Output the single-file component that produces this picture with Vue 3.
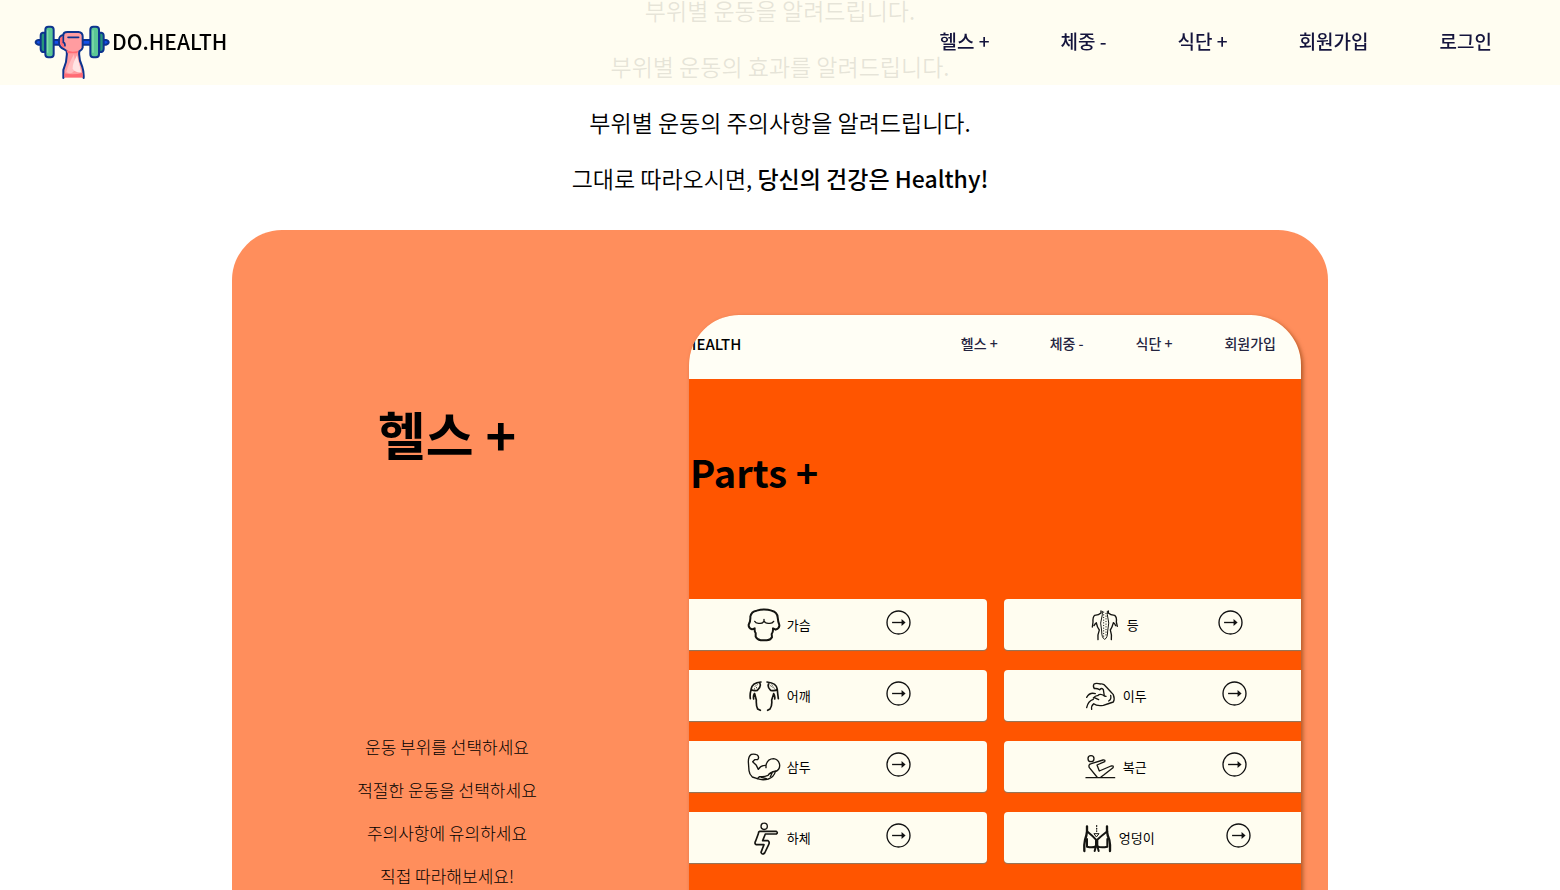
<script setup>
const navItems = ['헬스 +', '체중 -', '식단 +', '회원가입', '로그인']
const previewNav = ['헬스 +', '체중 -', '식단 +', '회원가입']
const steps = ['운동 부위를 선택하세요', '적절한 운동을 선택하세요', '주의사항에 유의하세요', '직접 따라해보세요!']

const parts = [
  {
    name: '가슴',
    box: '189 52 126 102',
    shapes: [
      { d: 'M230 60 Q253 53 275 60 Q292 64 293 80 Q294 92 298 103 Q299 113 287 117 L279 113 Q280 123 275 130 L276 140 Q271 149 260 149 H242 Q231 147 227 138 L227 127 Q223 122 224 113 L216 116 Q205 112 206 102 Q212 91 211 78 Q214 62 230 60 Z', w: 6 },
      { d: 'M224 92 Q227 99 238 98 Q249 99 252 91 Q256 99 267 98 Q277 99 281 92 M252 86 V93', w: 4 }
    ]
  },
  {
    name: '등',
    box: '251 52 126 102',
    shapes: [
      { d: 'M305 61 V67 Q299 73 286 74 Q280 79 281 94 L279 109 M327 61 V67 Q333 73 346 74 Q353 79 351 94 L354 107 M291 96 Q287 99 284 105 M342 96 Q347 99 349 105 M291 97 Q294 111 300 118 Q294 133 296 147 M342 97 Q338 111 333 118 Q338 133 336 147', w: 4 },
      { d: 'M309 62 V72 Q300 98 307 121 Q307 142 316 146 Q325 142 325 121 Q332 98 324 72 V62', w: 3 },
      { d: 'M313 64 V139 M320 68 V136', w: 3, dash: '1 7' }
    ]
  },
  {
    name: '어깨',
    box: '189 265 126 102',
    shapes: [
      { d: 'M243 274 Q216 276 213 296 Q218 302 232 299 Q244 288 240 279 M213 298 Q209 311 211 324 M223 309 Q219 316 221 325 M224 309 L229 328 Q228 346 233 355 L241 359 M261 274 Q290 277 292 296 Q286 302 272 299 Q261 289 266 279 M292 298 Q293 309 295 324 M281 309 Q286 317 284 325 M281 309 L275 328 Q277 346 270 355 L263 359', w: 5 },
      { d: 'M225 287 L234 281 M223 295 L233 289 M270 284 L280 292 M276 283 L284 295', w: 3, dash: '1 6' }
    ]
  },
  {
    name: '이두',
    box: '240 265 126 102',
    shapes: [
      { d: 'M302 297 Q292 292 286 294 Q281 286 285 280 Q291 276 305 280 Q313 277 322 289 Q334 302 343 312 Q348 325 343 334 Q327 339 313 344 Q293 347 284 339 Q276 346 278 356', w: 4 },
      { d: 'M302 297 Q309 290 313 297 L316 316 Q304 307 296 315 Q290 314 283 322 M316 316 L321 317 M335 314 Q338 326 329 331 M289 309 Q272 304 263 320 M286 321 L299 327 M283 326 Q267 331 263 351', w: 4 }
    ]
  },
  {
    name: '삼두',
    box: '189 46 126 102',
    shapes: [
      { d: 'M224 75 L233 75 Q239 68 232 61 Q224 57 214 59 Q205 65 205 81 L207 108 Q208 119 217 127 L232 132 Q247 138 265 133 Q282 127 286 111 Q300 105 299 91 Q297 75 281 72 Q262 72 258 92 Q243 91 235 104 L229 92 L218 81 Z M258 92 V99', w: 4 },
      { d: 'M288 109 Q270 113 264 122 Q251 127 238 126 L232 132 M278 111 L271 126 M244 128 L259 132', w: 4 }
    ]
  },
  {
    name: '복근',
    box: '240 46 126 102',
    shapes: [
      { d: 'M285 72 A9 9 0 1 1 267 72 A9 9 0 1 1 285 72', w: 4 },
      { d: 'M294 127 L271 99 Q267 89 277 87 L312 76 Q320 75 317 81 L294 91 L301 109 L336 94 Q345 92 342 99 L314 121 L306 127 M261 129 H347', w: 4 }
    ]
  },
  {
    name: '하체',
    box: '189 259 126 102',
    shapes: [
      { d: 'M262 275 A9 9 0 1 1 243 275 A9 9 0 1 1 262 275', w: 4 },
      { d: 'M239 290 H289 Q295 294 289 298 H256 L248 318 H264 Q270 322 266 330 L254 355 Q246 362 243 353 L252 330 H229 Q222 327 227 319 L235 297 Q235 291 239 290 Z', w: 5 }
    ]
  },
  {
    name: '엉덩이',
    box: '227 259 126 102',
    shapes: [
      { d: 'M263 275 V290 Q262 302 257 316 Q254 328 255 349 M323 275 V290 Q324 302 330 316 Q333 328 332 349', w: 7 },
      { d: 'M263 290 Q280 304 292 317 Q306 304 324 290 M263 313 V336 Q282 341 290 334 V317 M324 313 V336 Q304 341 294 334 V317 M290 334 L286 349 M294 334 L298 349', w: 6 },
      { d: 'M292 273 V290', w: 4, dash: '2 6' },
      { d: 'M285 297 H299 L292 306 Z', w: 3 }
    ]
  }
]
</script>

<template>
  <div class="page">
    <header class="topbar">
      <a class="brand" href="#">
        <svg class="brand-logo" viewBox="102 75 228 162" aria-hidden="true">
          <g stroke="#0d348e" stroke-width="6" stroke-linejoin="round" stroke-linecap="round">
            <path d="M115 120 H318 Q326 122 326 127 Q326 132 318 134 H115 Q107 132 107 127 Q107 122 115 120 Z" fill="#1350e8" />
            <path d="M136 98 H128 Q122 99 122 107 V146 Q122 154 128 156 H136 Z" fill="#27967a" />
            <path d="M298 98 H304 Q311 99 311 107 V146 Q311 154 304 156 H298 Z" fill="#27967a" />
            <rect x="136" y="80" width="25" height="92" rx="9" fill="#5bc795" />
            <rect x="271" y="80" width="26" height="92" rx="9" fill="#5bc795" />
            <path d="M190 234 V210 Q203 181 200 153 L191 147 Q177 142 177 127 Q175 108 190 105 Q190 96 202 96 H235 Q248 97 248 109 V143 Q247 149 238 154 Q235 176 247 201 Q252 216 251 234" fill="#ff9ca0" />
          </g>
          <path d="M180 115 Q179 132 187 141 L193 144 V132 Q189 127 190 110 Q183 109 180 115 M193 231 V220 Q222 226 248 218 V231 Z M199 151 L218 155 L235 153 L231 160 H203 Z" fill="#ff6b74" />
          <path d="M222 163 Q205 193 199 216 Q217 228 227 205 Z" fill="#ffbec1" />
          <path d="M231 166 Q216 195 218 206 Q227 219 244 217 L240 201 Z" fill="#ffe4e4" />
          <path d="M190 106 V127 Q195 128 195 137 M204 112 H236" fill="none" stroke="#0d348e" stroke-width="5" stroke-linecap="round" />
          <path d="M143 91 V158 M279 91 V158" stroke="#83dfac" stroke-width="4" />
        </svg>
        <span>DO.HEALTH</span>
      </a>
      <nav class="menu">
        <a v-for="item in navItems" :key="item" href="#">{{ item }}</a>
      </nav>
    </header>

    <main>
      <section class="intro">
        <p>부위별 운동을 알려드립니다.</p>
        <p>부위별 운동의 효과를 알려드립니다.</p>
        <p>부위별 운동의 주의사항을 알려드립니다.</p>
        <p>그대로 따라오시면, <strong>당신의 건강은 Healthy!</strong></p>
      </section>

      <section class="feature">
        <div class="feature-text">
          <h2>헬스 +</h2>
          <div class="steps">
            <p v-for="step in steps" :key="step">{{ step }}</p>
          </div>
        </div>

        <div class="preview">
          <div class="preview-bar">
            <span class="preview-brand">DO.HEALTH</span>
            <div class="preview-menu">
              <span v-for="item in previewNav" :key="item">{{ item }}</span>
            </div>
          </div>
          <h3>Parts +</h3>
          <div class="parts">
            <div v-for="part in parts" :key="part.name" class="part">
              <div class="part-label">
                <svg class="part-icon" :viewBox="part.box" aria-hidden="true">
                  <path
                    v-for="(shape, i) in part.shapes"
                    :key="i"
                    :d="shape.d"
                    :stroke-width="shape.w"
                    :stroke-dasharray="shape.dash"
                  />
                </svg>
                <span>{{ part.name }}</span>
              </div>
              <svg class="arrow" viewBox="0 0 74 74" aria-hidden="true">
                <circle cx="37" cy="37" r="34" />
                <path d="M18 37 H49" />
                <path class="arrow-head" d="M46 27 L58 37 L46 47 Z" />
              </svg>
            </div>
          </div>
        </div>
      </section>
    </main>
  </div>
</template>

<style>
body {
  margin: 0;
  background: #fff;
}
</style>

<style scoped>
.page {
  height: 100vh;
  overflow: hidden;
  color: #000;
  font-family: "Noto Sans CJK KR", sans-serif;
}

.topbar {
  position: fixed;
  z-index: 1;
  top: 0;
  left: 0;
  right: 0;
  box-sizing: border-box;
  height: 85px;
  padding: 0 68px 4px 34px;
  display: flex;
  align-items: center;
  justify-content: space-between;
  background: rgba(255, 253, 240, 0.9);
}

.brand {
  display: flex;
  align-items: center;
  gap: 2px;
  color: #000;
  font-size: 21px;
  font-weight: 500;
  line-height: 32px;
  text-decoration: none;
}

.brand-logo {
  width: 76px;
  height: 54px;
  margin-top: 23px;
}

.menu {
  display: flex;
  gap: 71px;
}

.menu a {
  color: #14143c;
  font-size: 19px;
  font-weight: 500;
  line-height: 30px;
  text-decoration: none;
}

.intro {
  margin-top: -18px;
  text-align: center;
  font-size: 23px;
  font-weight: 350;
  line-height: 56px;
}

.intro p {
  margin: 0;
}

.intro strong {
  font-weight: 500;
}

.feature {
  box-sizing: border-box;
  max-width: 1096px;
  margin: 24px auto 0;
  padding: 85px 27px 85px 0;
  display: grid;
  grid-template-columns: 430fr 612fr;
  gap: 27px;
  border-radius: 50px;
  background: #ff8e5c;
}

.feature-text {
  text-align: center;
}

.feature-text h2 {
  margin: 80px 0 0;
  font-size: 52px;
  font-weight: 700;
  line-height: 78px;
}

.steps {
  margin-top: 252px;
  font-size: 17px;
  font-weight: 300;
  line-height: 43px;
}

.steps p {
  margin: 0;
}

.preview {
  min-width: 0;
  min-height: 700px;
  overflow: hidden;
  border-radius: 50px;
  background: #f50;
  box-shadow: 2px 2px 4px rgba(120, 50, 0, 0.6);
}

.preview-bar {
  box-sizing: border-box;
  height: 64px;
  padding: 0 25px 8px 0;
  display: flex;
  align-items: center;
  justify-content: space-between;
  background: #fffef5;
}

.preview-brand {
  margin-left: -30px;
  font-size: 15px;
  font-weight: 500;
}

.preview-menu {
  display: flex;
  gap: 52px;
  color: #24243f;
  font-size: 14px;
  font-weight: 500;
}

.preview h3 {
  margin: 62px 0 97px;
  padding-left: 1px;
  font-size: 38px;
  font-weight: 700;
  line-height: 61px;
}

.parts {
  display: grid;
  grid-template-columns: 319px 319px;
  justify-content: center;
  gap: 20px 17px;
}

.part {
  height: 51px;
  display: flex;
  align-items: center;
  justify-content: space-evenly;
  border-radius: 4px;
  background: #fffdf0;
  box-shadow: 0 1px 1px #8c7860;
}

.part-label {
  display: flex;
  align-items: center;
  gap: 2px;
  font-size: 13px;
  line-height: 19px;
}

.part-icon {
  width: 42px;
  height: 34px;
  fill: none;
  stroke: #151511;
  stroke-linecap: round;
  stroke-linejoin: round;
}

.arrow {
  width: 25px;
  height: 25px;
  margin-bottom: 4px;
  fill: none;
  stroke: #111;
  stroke-width: 4;
}

.arrow-head {
  fill: #111;
  stroke: none;
}
</style>
